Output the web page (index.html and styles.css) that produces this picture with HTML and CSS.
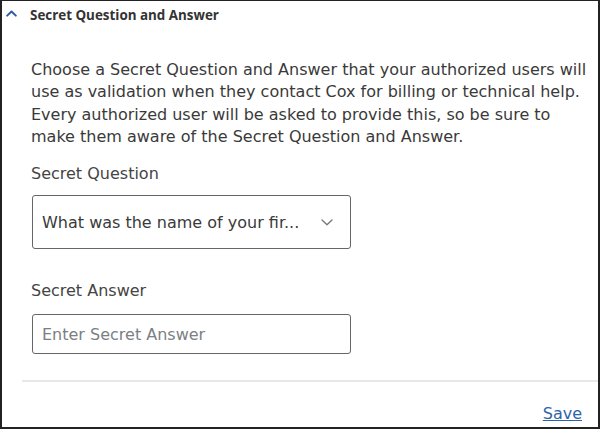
FILE: index.html
```html
<!DOCTYPE html>
<html>
<head>
<meta charset="utf-8">
<link rel="stylesheet" href="styles.css">
</head>
<body>
<div class="frame">
  <div class="header">
    <svg class="chev-up" width="11" height="7" viewBox="0 0 11 7"><path d="M1.2 5.6 L5.5 1.5 L9.8 5.6" fill="none" stroke="#2b5c9e" stroke-width="2" stroke-linecap="round" stroke-linejoin="round"/></svg>
    <span class="title">Secret Question and Answer</span>
  </div>
  <div class="body">
    <p class="intro">Choose a Secret Question and Answer that your authorized users will use as validation when they contact Cox for billing or technical help. Every authorized user will be asked to provide this, so be sure to make them aware of the Secret Question and Answer.</p>
    <label class="label">Secret Question</label>
    <div class="select">
      <span class="select-text">What was the name of your fir...</span>
      <svg class="chev-down" width="12" height="7" viewBox="0 0 12 7"><path d="M1 1 L6 5.8 L11 1" fill="none" stroke="#777" stroke-width="1.3" stroke-linecap="round" stroke-linejoin="round"/></svg>
    </div>
    <label class="label answer-label">Secret Answer</label>
    <div class="input"><span class="placeholder">Enter Secret Answer</span></div>
  </div>
  <div class="divider"></div>
  <div class="footer"><a class="save" href="#">Save</a></div>
</div>
</body>
</html>
```
FILE: styles.css
```css
html, body {
  margin: 0;
  padding: 0;
  background: #fff;
}
.frame {
  box-sizing: border-box;
  width: 600px;
  height: 429px;
  border-top: 1px solid #222;
  border-left: 2px solid #222;
  border-right: 2px solid #222;
  border-bottom: 2px solid #222;
  font-family: "DejaVu Sans", "Liberation Sans", sans-serif;
  color: #333;
  display: flex;
  flex-direction: column;
}
.header {
  display: flex;
  align-items: center;
  height: 30px;
  padding-left: 4px;
}
.chev-up {
  margin-right: 13px;
  margin-top: -6px;
}
.title {
  font-family: "Open Sans", "Liberation Sans", sans-serif;
  font-size: 13.4px;
  font-weight: 700;
  color: #333;
  margin-top: -2px;
}
.body {
  padding: 28px 0 0 29px;
}
.intro {
  margin: 0;
  font-size: 16px;
  line-height: 22.3px;
  width: 562px;
  color: #3a3a3a;
}
.label {
  display: block;
  font-size: 16px;
  line-height: 22px;
  margin-top: 15px;
  color: #444;
}
.select {
  box-sizing: border-box;
  margin-top: 10px;
  margin-left: 1px;
  width: 319px;
  height: 54px;
  border: 1px solid #666;
  border-radius: 3px;
  display: flex;
  align-items: center;
  justify-content: space-between;
  padding: 0 17px 0 9px;
}
.select-text {
  font-size: 16px;
  color: #3a3a3a;
}
.answer-label {
  margin-top: 31px;
}
.input {
  box-sizing: border-box;
  margin-top: 12px;
  margin-left: 1px;
  width: 319px;
  height: 40px;
  border: 1px solid #666;
  border-radius: 3px;
  display: flex;
  align-items: center;
  padding-left: 9px;
}
.placeholder {
  font-size: 16px;
  color: #7a7f85;
}
.divider {
  margin-top: 26px;
  margin-left: 20px;
  height: 2px;
  background: #e8e8e6;
}
.footer {
  display: flex;
  justify-content: flex-end;
  padding: 22px 16px 0 0;
}
.save {
  font-size: 16px;
  color: #2f63a8;
  text-decoration: underline;
}
```
